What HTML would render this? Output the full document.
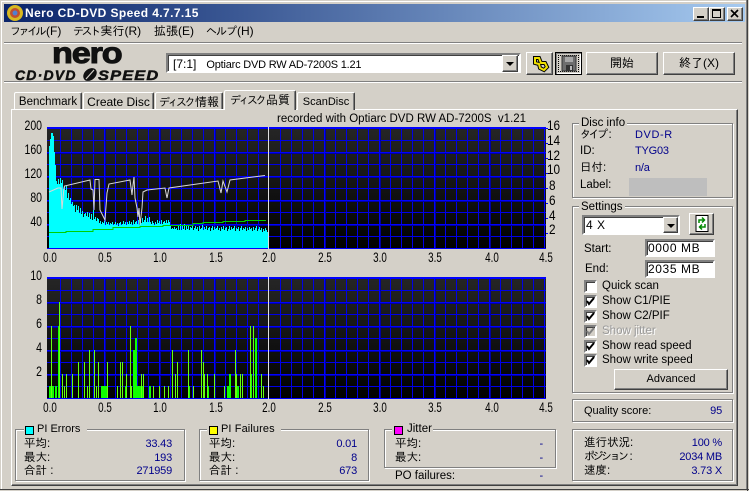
<!DOCTYPE html>
<html><head><meta charset="utf-8"><title>Nero CD-DVD Speed</title>
<style>
html,body{margin:0;padding:0;background:#d4d0c8}
#w{position:relative;width:749px;height:491px;overflow:hidden;background:#d4d0c8;font:11.5px/14px "Liberation Sans","IPAGothic","Noto Sans CJK JP",sans-serif;color:#000}
#w div,#w span.t{position:absolute;box-sizing:border-box}
.t{position:absolute;white-space:nowrap;height:14px;line-height:14px}
.k{font-size:11px;letter-spacing:-2.5px}
.n{color:#00008b;font-size:11px;letter-spacing:-.2px}
.r{text-align:right}
.yl{left:12px;width:30px;font-size:14px;text-align:right;transform:scaleX(.75);transform-origin:100% 50%}
.rl{font-size:14px;transform:scaleX(.84);transform-origin:0 50%}
.xl{width:40px;text-align:center;font-size:14px;transform:scaleX(.7)}
.g{border:1px solid #808080;box-shadow:1px 1px 0 #fff,inset 1px 1px 0 #fff}
.btn{background:#d4d0c8;border:1px solid;border-color:#fff #404040 #404040 #fff;box-shadow:inset -1px -1px 0 #808080;text-align:center}
.sunk{background:#fff;border:2px solid;border-color:#808080 #fff #fff #808080;box-shadow:inset 1px 1px 0 #404040}
.dd{background:#d4d0c8;border:1px solid;border-color:#fff #404040 #404040 #fff;box-shadow:inset -1px -1px 0 #808080}
.dd:after{content:"";position:absolute;left:3px;top:6px;border:4px solid transparent;border-top:4px solid #000;border-bottom:0}
.cb{width:13px;height:13px;left:584px;background:#fff;border:2px solid;border-color:#808080 #fff #fff #808080;box-shadow:inset 1px 1px 0 #404040}
.tab{background:#d4d0c8;border:1px solid #fff;border-right-color:#404040;border-bottom:0;border-radius:2px 2px 0 0;box-shadow:inset -1px 0 0 #808080;text-align:center;padding-top:2px;white-space:nowrap}
.sq{width:9px;height:9px;border:1px solid #000}
.bg{background:#d4d0c8;height:14px}
</style></head><body><div id="w">
<!-- frame -->
<div style="left:1px;top:1px;width:746px;height:1px;background:#fff"></div>
<div style="left:1px;top:1px;width:1px;height:488px;background:#fff"></div>
<div style="left:746px;top:0;width:1px;height:490px;background:#808080"></div>
<div style="left:747px;top:0;width:1px;height:491px;background:#404040"></div>
<div style="left:0;top:489px;width:749px;height:1px;background:#404040"></div>
<!-- title -->
<div style="left:4px;top:4px;width:741px;height:18px;background:linear-gradient(90deg,#0a246a,#a6caf0)"></div>
<svg style="position:absolute;left:6px;top:4px" width="18" height="18"><circle cx="9" cy="9" r="8" fill="#d8b820"/><circle cx="9" cy="9" r="5" fill="#c05030"/><circle cx="9" cy="9" r="2.5" fill="#5080d0"/></svg>
<span class="t" style="left:25px;top:6px;color:#fff;font-weight:bold;font-size:12px;letter-spacing:.4px">Nero CD-DVD Speed 4.7.7.15</span>
<div class="btn" style="left:693px;top:7px;width:16px;height:14px"></div><div style="left:697px;top:16px;width:7px;height:2px;background:#000"></div>
<div class="btn" style="left:709px;top:7px;width:16px;height:14px"></div><div style="left:712px;top:9px;width:9px;height:9px;border:1px solid #000;border-top-width:2px"></div>
<div class="btn" style="left:727px;top:7px;width:16px;height:14px"></div>
<svg style="position:absolute;left:727px;top:7px" width="16" height="14"><path d="M4 3l7 7M11 3l-7 7" stroke="#000" stroke-width="1.6"/></svg>
<!-- menu -->
<span class="t" style="left:10px;top:24px;font-size:12px"><span class="k">ファイル</span><span style="margin-left:2px">(F)</span></span>
<span class="t" style="left:73px;top:24px;font-size:12px"><span class="k">テスト</span><span style="margin-left:2px">実行(R)</span></span>
<span class="t" style="left:154px;top:24px;font-size:12px">拡張(E)</span>
<span class="t" style="left:206px;top:24px;font-size:12px"><span style="font-size:11px;letter-spacing:-1px">ヘルプ</span><span style="margin-left:1px">(H)</span></span>
<div style="left:4px;top:42px;width:738px;height:1px;background:#808080"></div><div style="left:4px;top:43px;width:738px;height:1px;background:#fff"></div>
<div style="left:4px;top:81px;width:738px;height:1px;background:#808080"></div><div style="left:4px;top:82px;width:738px;height:1px;background:#fff"></div>
<!-- logo -->
<span class="t" style="left:52px;top:43px;height:22px;line-height:22px;font-size:30px;font-weight:bold;letter-spacing:-1px;color:#111;-webkit-text-stroke:1px #111;transform-origin:0 50%;transform:scaleX(1.14)">nero</span>
<span class="t" style="left:15px;top:68px;font-size:14px;font-weight:bold;font-style:italic;letter-spacing:1.2px;color:#111;-webkit-text-stroke:.5px #111">CD·DVD</span>
<svg style="position:absolute;left:82px;top:68px" width="16" height="13"><ellipse cx="8" cy="6.5" rx="7.5" ry="5.5" fill="#111" transform="rotate(-40 8 6.5)"/><path d="M4 11L12 2" stroke="#d4d0c8" stroke-width="1.2"/></svg>
<span class="t" style="left:98px;top:68px;font-size:14px;font-weight:bold;font-style:italic;letter-spacing:1px;color:#111;-webkit-text-stroke:.5px #111;transform-origin:0 50%;transform:scaleX(1.17)">SPEED</span>
<!-- drive combo -->
<div class="sunk" style="left:166px;top:53px;width:355px;height:20px"></div>
<span class="t" style="left:173px;top:57px;font-size:11px;letter-spacing:-.2px"><span style="font-size:12px;letter-spacing:0">[7:1]</span><span style="margin-left:10px">Optiarc DVD RW AD-7200S 1.21</span></span>
<div class="dd" style="left:502px;top:55px;width:16px;height:17px"></div>
<div class="btn" style="left:526px;top:52px;width:27px;height:23px"></div>
<svg style="position:absolute;left:530px;top:53px" width="20" height="20" fill="none"><g stroke="#000" stroke-width="4"><path d="M5 5h4l2 5h4l2 4-3 3-4-2-1-4-4-1z"/></g><g stroke="#f0e000" stroke-width="2"><path d="M5 5h4l2 5h4l2 4-3 3-4-2-1-4-4-1z"/></g></svg>
<div class="btn" style="left:555px;top:52px;width:27px;height:23px;border-color:#000;box-shadow:inset 1px 1px 0 #808080,inset -1px -1px 0 #fff"></div>
<div style="left:558px;top:55px;width:21px;height:17px;border:1px dotted #000"></div>
<svg style="position:absolute;left:561px;top:55px" width="16" height="17"><path d="M1 1h14v15H1z" fill="#6e6e6e" stroke="#333"/><path d="M4 2h8v5H4z" fill="#a8a8a8"/><path d="M5 10h7v6H5z" fill="#333"/><path d="M9 11h2v4H9z" fill="#bbb"/></svg>
<div class="btn" style="left:586px;top:52px;width:72px;height:23px;line-height:20px;font-size:12px">開始</div>
<div class="btn" style="left:663px;top:52px;width:72px;height:23px;line-height:20px;font-size:12px">終了(X)</div>
<!-- tabs + panel -->
<div class="tab" style="left:14px;top:92px;width:68px;height:18px">Benchmark</div>
<div class="tab" style="left:83px;top:92px;width:71px;height:18px;font-size:12px">Create Disc</div>
<div class="tab" style="left:155px;top:92px;width:68px;height:18px;font-size:12px"><span class="k">ディスク</span><span style="margin-left:2px">情報</span></div>
<div style="left:11px;top:109px;width:727px;height:377px;border:1px solid;border-color:#fff #404040 #404040 #fff;box-shadow:inset -1px -1px 0 #808080"></div>
<div class="tab" style="left:224px;top:90px;width:72px;height:20px;padding-top:2px;z-index:2;font-size:12px"><span class="k">ディスク</span><span style="margin-left:2px">品質</span></div>
<div class="tab" style="left:297px;top:92px;width:58px;height:18px;font-size:11px">ScanDisc</div>
<span class="t" style="left:277px;top:112px">recorded with Optiarc DVD RW AD-7200S&nbsp;&nbsp;v1.21</span>
<!-- charts -->
<svg style="position:absolute;left:0;top:0" width="749" height="491" shape-rendering="crispEdges">
<defs><linearGradient id="bg" x1="0" y1="0" x2="0" y2="1"><stop offset="0" stop-color="#262626"/><stop offset="1" stop-color="#000"/></linearGradient>
<g id="grid">
<rect x="47" y="127" width="499" height="122" fill="url(#bg)"/>
<path fill="none" stroke="#0000e8" d="M60.5 128V248M71.5 128V248M82.5 128V248M93.5 128V248M115.5 128V248M126.5 128V248M137.5 128V248M148.5 128V248M170.5 128V248M181.5 128V248M192.5 128V248M203.5 128V248M225.5 128V248M236.5 128V248M247.5 128V248M258.5 128V248M280.5 128V248M291.5 128V248M302.5 128V248M313.5 128V248M335.5 128V248M346.5 128V248M357.5 128V248M368.5 128V248M390.5 128V248M401.5 128V248M412.5 128V248M423.5 128V248M445.5 128V248M456.5 128V248M467.5 128V248M478.5 128V248M500.5 128V248M511.5 128V248M522.5 128V248M533.5 128V248M47 140.5H546M47 164.5H546M47 188.5H546M47 212.5H546M47 236.5H546"/>
<path fill="none" stroke="#0000a0" d="M105.5 128V248M160.5 128V248M215.5 128V248M325.5 128V248M380.5 128V248M435.5 128V248M490.5 128V248M47 153.5H546M47 177.5H546M47 201.5H546M47 225.5H546"/>
<path fill="none" stroke="#0000ff" d="M104.5 128V248M159.5 128V248M214.5 128V248M324.5 128V248M379.5 128V248M434.5 128V248M489.5 128V248M544.5 128V248M47 152.5H546M47 176.5H546M47 200.5H546M47 224.5H546M47 248.5H546"/>
<rect x="47" y="127" width="499" height="2" fill="#0000ff"/>
</g></defs>
<use href="#grid"/>
<use href="#grid" y="150"/>
<!-- ticks -->
<path stroke="#0000ff" fill="none" d="M546 128.5h2M546 143.5h2M546 158.5h2M546 173.5h2M546 188.5h2M546 203.5h2M546 218.5h2M546 233.5h2"/>
<!-- PI errors -->
<path fill="#00ffff" d="M49 248V146h1V139h1V133h2V136h1V152h1V165h1V181h1V184h1V179h1V184h1V178h1V183h1V180h1V189h1V186h1V190h1V186h1V198h1V193h1V200h1V198h1V204h1V202h1V206h1V205h1V212h1V205h1V210h1V206h1V213h1V208h1V214h1V211h1V217h1V214h1V213h1V216h1V212h1V217h1V213h1V219h1V214h1V220h1V210h1V219h1V217h1V221h1V218h1V219h1V223h1V221h1V224h1V222h1V223h1V221h1V225h1V222h1V224h1V222h1V225h1V223h1V224h1V222h1V225h1V224h1V222h1V225h1V223h1V226h1V223h1V222h1V225h1V224h1V221h1V224h1V222h1V225h1V222h1V224h1V221h1V224h1V222h1V225h1V220h1V224h1V222h1V221h1V224h1V220h1V225h1V219h1V223h1V218h1V222h1V220h1V216h1V222h1V218h1V222h1V217h1V222h1V224h1V221h1V223h1V225h1V222h1V224h1V220h1V223h1V221h1V224h1V220h1V224h1V222h1V221h1V223h1V220h1V223h1V220h1V222h1V225h1V229h1V228h1V229h1V227h1V229h1V228h1V230h1V226h1V230h1V224h1V230h1V225h1V229h1V224h1V230h1V226h1V229h1V225h1V230h1V227h1V228h1V226h1V230h1V228h1V226h1V229h1V227h1V231h1V226h1V229h1V228h1V225h1V230h1V227h1V229h1V226h1V230h1V228h1V227h1V231h1V228h1V226h1V230h1V227h1V229h1V228h1V226h1V230h1V228h1V231h1V227h1V229h1V226h1V230h1V228h1V227h1V231h1V229h1V226h1V230h1V227h1V229h1V228h1V226h1V231h1V228h1V229h1V227h1V231h1V228h1V226h1V230h1V228h1V229h1V227h1V231h1V228h1V230h1V227h1V229h1V228h1V231h1V227h1V230h1V228h1V226h1V231h1V229h1V227h1V230h1V228h1V232h1V229h1V231h1V228h1V230h1V232H268V248z"/>
<!-- write/read speed lines -->
<path fill="none" stroke="#00d000" d="M49 232.5H66V231.5H93V229.5H113V227.5H140V226.5H163V225.5H193V223.5H203V222.5H223V221.5H245V220.5H266"/>
<path fill="none" shape-rendering="auto" stroke="#d8d8d8" d="M49 192L58 188H61L62 209L64 188L64.5 186L90 180L91 189L93 190L94 210L95 179.5H99L100 210L105 220L107 193L109 184L130 180L132 195L133 185L134 177L135 198L137 208L138 217L139 208L140 225L142 208L143 192L147 190L165 188L167 198L169 188L218 181L221 193L223 181L227 192L230 180L265 175.5"/>
<rect x="268" y="127" width="1" height="122" fill="#e0e0e0"/>
<rect x="268" y="277" width="1" height="122" fill="#e0e0e0"/>
<!-- PI failures -->
<g fill="#11ff00">
<rect x="49" y="386" width="4" height="12"/><rect x="53" y="386" width="1" height="12"/><rect x="55" y="386" width="2" height="12"/>
<rect x="58" y="326" width="2" height="72"/><rect x="101" y="386" width="7" height="12"/><rect x="125" y="386" width="2" height="12"/>
<rect x="133" y="350" width="2" height="48"/><rect x="135" y="338" width="2" height="60"/><rect x="137" y="386" width="7" height="12"/>
<rect x="149" y="386" width="2" height="12"/><rect x="188" y="386" width="2" height="12"/><rect x="207" y="386" width="2" height="12"/>
<rect x="227" y="386" width="4" height="12"/><rect x="229" y="374" width="2" height="24"/><rect x="235" y="386" width="4" height="12"/>
<rect x="250" y="374" width="2" height="24"/><rect x="255" y="338" width="2" height="60"/>
</g>
<g fill="#66ff11">
<rect x="51" y="326" width="1" height="72"/><rect x="59" y="302" width="1" height="96"/><rect x="62" y="374" width="1" height="24"/><rect x="64" y="386" width="1" height="12"/><rect x="66" y="374" width="1" height="24"/><rect x="72" y="374" width="1" height="24"/><rect x="78" y="362" width="1" height="36"/><rect x="84" y="362" width="1" height="36"/><rect x="87" y="386" width="1" height="12"/><rect x="89" y="350" width="1" height="48"/><rect x="94" y="350" width="1" height="48"/><rect x="96" y="386" width="1" height="12"/><rect x="98" y="362" width="1" height="36"/><rect x="107" y="362" width="1" height="36"/><rect x="117" y="386" width="1" height="12"/><rect x="120" y="362" width="1" height="36"/><rect x="122" y="362" width="1" height="36"/><rect x="126" y="374" width="1" height="24"/><rect x="130" y="326" width="1" height="72"/><rect x="131" y="386" width="1" height="12"/><rect x="141" y="374" width="1" height="24"/><rect x="143" y="374" width="1" height="24"/><rect x="153" y="386" width="1" height="12"/><rect x="159" y="386" width="1" height="12"/><rect x="164" y="386" width="1" height="12"/><rect x="168" y="386" width="1" height="12"/><rect x="172" y="350" width="1" height="48"/><rect x="175" y="374" width="1" height="24"/><rect x="177" y="362" width="1" height="36"/><rect x="188" y="350" width="1" height="48"/><rect x="193" y="386" width="1" height="12"/><rect x="201" y="350" width="1" height="48"/><rect x="203" y="362" width="1" height="36"/><rect x="204" y="374" width="1" height="24"/><rect x="207" y="374" width="1" height="24"/><rect x="214" y="374" width="1" height="24"/><rect x="224" y="386" width="1" height="12"/><rect x="235" y="350" width="1" height="48"/><rect x="236" y="374" width="1" height="24"/><rect x="240" y="374" width="1" height="24"/><rect x="242" y="374" width="1" height="24"/><rect x="250" y="326" width="1" height="72"/><rect x="253" y="326" width="1" height="72"/><rect x="261" y="374" width="1" height="24"/><rect x="263" y="386" width="1" height="12"/>
</g>
</svg>
<!-- axis labels -->
<span class="t yl" style="top:118px">200</span>
<span class="t yl" style="top:142px">160</span>
<span class="t yl" style="top:166px">120</span>
<span class="t yl" style="top:190px">80</span>
<span class="t yl" style="top:214px">40</span>
<span class="t yl" style="top:268px">10</span>
<span class="t yl" style="top:292px">8</span>
<span class="t yl" style="top:316px">6</span>
<span class="t yl" style="top:340px">4</span>
<span class="t yl" style="top:364px">2</span>
<span class="t rl" style="left:547px;top:118px">16</span>
<span class="t rl" style="left:547px;top:133px">14</span>
<span class="t rl" style="left:547px;top:148px">12</span>
<span class="t rl" style="left:547px;top:162px">10</span>
<span class="t rl" style="left:549px;top:178px">8</span>
<span class="t rl" style="left:549px;top:193px">6</span>
<span class="t rl" style="left:549px;top:208px">4</span>
<span class="t rl" style="left:549px;top:222px">2</span>
<span class="t xl" style="left:30px;top:250px">0.0</span><span class="t xl" style="left:85px;top:250px">0.5</span><span class="t xl" style="left:140px;top:250px">1.0</span><span class="t xl" style="left:196px;top:250px">1.5</span><span class="t xl" style="left:249px;top:250px">2.0</span><span class="t xl" style="left:305px;top:250px">2.5</span><span class="t xl" style="left:360px;top:250px">3.0</span><span class="t xl" style="left:415px;top:250px">3.5</span><span class="t xl" style="left:472px;top:250px">4.0</span><span class="t xl" style="left:526px;top:250px">4.5</span>
<span class="t xl" style="left:30px;top:400px">0.0</span><span class="t xl" style="left:85px;top:400px">0.5</span><span class="t xl" style="left:140px;top:400px">1.0</span><span class="t xl" style="left:196px;top:400px">1.5</span><span class="t xl" style="left:249px;top:400px">2.0</span><span class="t xl" style="left:305px;top:400px">2.5</span><span class="t xl" style="left:360px;top:400px">3.0</span><span class="t xl" style="left:415px;top:400px">3.5</span><span class="t xl" style="left:472px;top:400px">4.0</span><span class="t xl" style="left:526px;top:400px">4.5</span>
<!-- disc info -->
<div class="g" style="left:572px;top:123px;width:161px;height:75px"></div>
<span class="t bg" style="left:579px;top:116px;padding:0 2px">Disc info</span>
<span class="t" style="left:580px;top:128px"><span class="k">タイプ</span><span style="margin-left:3px">:</span></span><span class="t n" style="left:635px;top:128px;letter-spacing:.6px">DVD-R</span>
<span class="t" style="left:580px;top:144px">ID:</span><span class="t n" style="left:635px;top:144px">TYG03</span>
<span class="t" style="left:580px;top:161px">日付:</span><span class="t n" style="left:635px;top:161px">n/a</span>
<span class="t" style="left:580px;top:178px">Label:</span>
<div style="left:629px;top:178px;width:78px;height:18px;background:#bebebe"></div>
<!-- settings -->
<div class="g" style="left:572px;top:206px;width:161px;height:187px"></div>
<span class="t bg" style="left:579px;top:200px;padding:0 2px">Settings</span>
<div class="sunk" style="left:582px;top:215px;width:98px;height:20px"></div>
<span class="t" style="left:586px;top:218px;font-size:12px;letter-spacing:.5px">4 X</span>
<div class="dd" style="left:663px;top:217px;width:15px;height:16px"></div>
<div class="btn" style="left:689px;top:213px;width:25px;height:22px"></div>
<svg style="position:absolute;left:695px;top:215px" width="14" height="17" fill="none"><path d="M1 .5h12v16H1z" fill="#fff" stroke="#000"/><path d="M4 8V5h5M7 2.5L9.5 5 7 7.5M10 9v3H5M7 9.5L4.5 12 7 14.5" stroke="#080" stroke-width="1.5"/></svg>
<span class="t" style="left:584px;top:242px">Start:</span>
<div class="sunk" style="left:645px;top:239px;width:70px;height:18px"></div><span class="t" style="left:648px;top:241px;font-size:12px;letter-spacing:.6px">0000 MB</span>
<span class="t" style="left:585px;top:262px">End:</span>
<div class="sunk" style="left:645px;top:260px;width:70px;height:18px"></div><span class="t" style="left:648px;top:262px;font-size:12px;letter-spacing:.6px">2035 MB</span>
<div class="cb" style="top:280px"></div><span class="t" style="left:602px;top:279px">Quick scan</span>
<div class="cb" style="top:295px"></div><span class="t" style="left:602px;top:294px">Show C1/PIE</span>
<div class="cb" style="top:310px"></div><span class="t" style="left:602px;top:309px">Show C2/PIF</span>
<div class="cb" style="top:325px;background:#d4d0c8"></div><span class="t" style="left:602px;top:324px;color:#9a9a9a;text-shadow:1px 1px 0 #fff">Show jitter</span>
<div class="cb" style="top:340px"></div><span class="t" style="left:602px;top:339px">Show read speed</span>
<div class="cb" style="top:354px"></div><span class="t" style="left:602px;top:353px">Show write speed</span>
<svg style="position:absolute;left:584px;top:295px" width="13" height="73" fill="none" stroke-width="2"><path stroke="#000" d="M3 6l2 3 5-6M3 21l2 3 5-6M3 51l2 3 5-6M3 65l2 3 5-6"/><path stroke="#808080" d="M3 36l2 3 5-6"/></svg>
<div class="btn" style="left:614px;top:369px;width:114px;height:21px;line-height:18px;font-size:11px">Advanced</div>
<!-- quality -->
<div class="g" style="left:572px;top:399px;width:161px;height:23px"></div>
<span class="t" style="left:584px;top:404px;font-size:11px">Quality score:</span><span class="t n r" style="left:682px;width:40px;top:404px">95</span>
<!-- progress -->
<div class="g" style="left:572px;top:429px;width:161px;height:52px"></div>
<span class="t" style="left:584px;top:436px">進行状況:</span><span class="t n r" style="left:662px;width:60px;top:436px">100 %</span>
<span class="t" style="left:584px;top:450px"><span class="k">ポジション</span><span style="margin-left:3px">:</span></span><span class="t n r" style="left:662px;width:60px;top:450px">2034 MB</span>
<span class="t" style="left:584px;top:464px">速度:</span><span class="t n r" style="left:662px;width:60px;top:464px">3.73 X</span>
<!-- PI errors -->
<div class="g" style="left:15px;top:429px;width:170px;height:52px"></div>
<span class="t bg" style="left:24px;top:422px;width:63px"></span>
<div class="sq" style="left:25px;top:426px;background:#00ffff"></div>
<span class="t" style="left:37px;top:422px;font-size:11px">PI Errors</span>
<span class="t" style="left:24px;top:437px">平均:</span><span class="t n r" style="left:112px;width:60px;top:437px">33.43</span>
<span class="t" style="left:24px;top:451px">最大:</span><span class="t n r" style="left:112px;width:60px;top:451px">193</span>
<span class="t" style="left:24px;top:464px">合計 :</span><span class="t n r" style="left:112px;width:60px;top:464px">271959</span>
<!-- PI failures -->
<div class="g" style="left:199px;top:429px;width:170px;height:52px"></div>
<span class="t bg" style="left:207px;top:422px;width:74px"></span>
<div class="sq" style="left:209px;top:426px;background:#ffff00"></div>
<span class="t" style="left:221px;top:422px;font-size:11px;letter-spacing:.1px">PI Failures</span>
<span class="t" style="left:209px;top:437px">平均:</span><span class="t n r" style="left:297px;width:60px;top:437px">0.01</span>
<span class="t" style="left:209px;top:451px">最大:</span><span class="t n r" style="left:297px;width:60px;top:451px">8</span>
<span class="t" style="left:209px;top:464px">合計 :</span><span class="t n r" style="left:297px;width:60px;top:464px">673</span>
<!-- jitter -->
<div class="g" style="left:384px;top:429px;width:172px;height:39px"></div>
<span class="t bg" style="left:392px;top:422px;width:41px"></span>
<div class="sq" style="left:394px;top:426px;background:#ff00ff"></div>
<span class="t" style="left:407px;top:422px">Jitter</span>
<span class="t" style="left:395px;top:437px">平均:</span><span class="t n r" style="left:483px;width:60px;top:437px">-</span>
<span class="t" style="left:395px;top:451px">最大:</span><span class="t n r" style="left:483px;width:60px;top:451px">-</span>
<span class="t" style="left:395px;top:469px">PO failures:</span><span class="t n r" style="left:483px;width:60px;top:469px">-</span>
</div></body></html>
